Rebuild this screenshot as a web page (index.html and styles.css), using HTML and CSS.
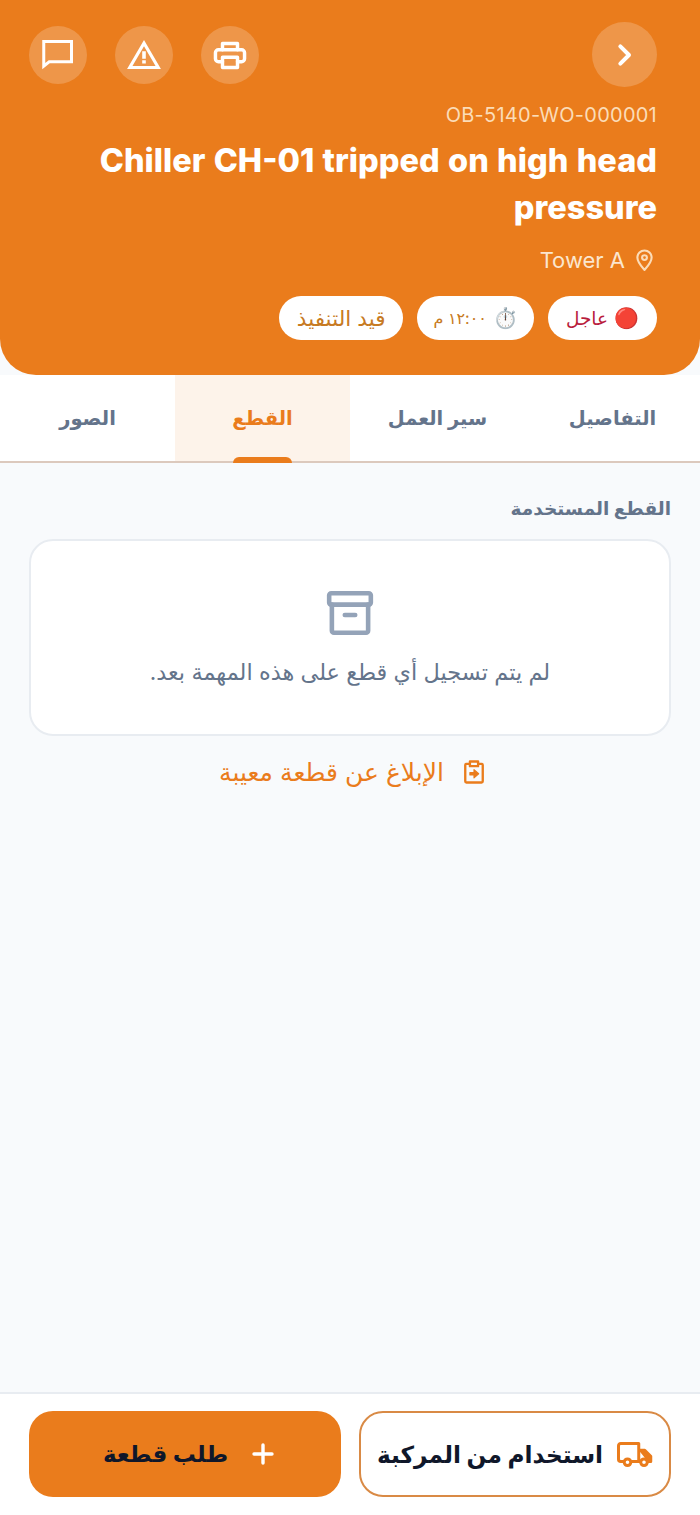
FILE: index.html
```html
<!DOCTYPE html>
<html lang="ar" dir="rtl">
<head>
    <meta charset="utf-8">
    <title>Work Order</title>
    <link rel="stylesheet" href="styles.css">
</head>
<body>
    <div class="page">
        <header class="hero">
            <div class="hero-top">
                <button class="back-btn" type="button">
                    <svg width="32" height="32" viewBox="0 0 24 24" fill="none" stroke="#fff" stroke-width="3" stroke-linecap="round" stroke-linejoin="round"><path d="M8.500 5.500l6.500 6.500-6.500 6.500"/></svg>
                </button>
                <div class="hero-actions">
                    <button class="icon-btn" type="button">
                        <svg width="36" height="36" viewBox="0 0 24 24" fill="none" stroke="#fff" stroke-width="2.300" stroke-linejoin="round" stroke-linecap="round"><path d="M7 8.500V4.300h10v4.200"/><path d="M7 16.500H4.300a2 2 0 0 1-2-2v-4a2 2 0 0 1 2-2h15.400a2 2 0 0 1 2 2v4a2 2 0 0 1-2 2H17"/><path d="M7 13.500h10v6.800H7z"/></svg>
                    </button>
                    <button class="icon-btn" type="button">
                        <svg width="36" height="36" viewBox="0 0 24 24" fill="#fff"><path fill-rule="evenodd" d="M12 2l11.300 19.300H.7L12 2zm0 4.200L4.300 19.300h15.400L12 6.200z"/><path d="M10.800 9.500h2.400v5h-2.400zM10.800 15.500h2.400v2.200h-2.400z"/></svg>
                    </button>
                    <button class="icon-btn" type="button">
                        <svg width="36" height="36" viewBox="0 0 24 24" fill="#fff"><path fill-rule="evenodd" d="M1.500 2H22v15.500H6.500l-5 4V2zm2 2v13.300l2.300-1.800H20V4H3.500z"/></svg>
                    </button>
                </div>
            </div>
            <div class="wo-code">OB-5140-WO-000001</div>
            <h1 class="wo-title">Chiller CH-01 tripped on high head pressure</h1>
            <div class="wo-location">
                <svg width="17" height="22" viewBox="4 1.500 16 21" fill="none" stroke="#fbdcb8" stroke-width="2" stroke-linejoin="round"><path d="M12 21.500c-1-1.200-6.800-7-6.800-11.800a6.800 6.800 0 0 1 13.600 0c0 4.800-5.800 10.600-6.800 11.800z"/><circle cx="12" cy="9.700" r="2.300"/></svg>
                <span class="wo-location-text">Tower A</span>
            </div>
            <div class="chips">
                <span class="chip chip-red"><span class="chip-emoji">🔴</span> عاجل</span>
                <span class="chip chip-time"><span class="chip-emoji">⏱️</span> ١٢:٠٠ م</span>
                <span class="chip chip-status">قيد التنفيذ</span>
            </div>
        </header>

        <nav class="tabs">
            <div class="tab">التفاصيل</div>
            <div class="tab">سير العمل</div>
            <div class="tab active">القطع</div>
            <div class="tab">الصور</div>
        </nav>

        <main class="content">
            <div class="section-label">القطع المستخدمة</div>
            <div class="empty-card">
                <svg width="50" height="50" viewBox="0 0 24 24" fill="none" stroke="#94a3b8" stroke-width="2.200" stroke-linecap="round" stroke-linejoin="round"><rect x="2" y="2" width="20" height="5.500" rx="1"/><path d="M3.300 7.500V20a1 1 0 0 0 1 1h15.400a1 1 0 0 0 1-1V7.500"/><path d="M9.500 12.500h5"/></svg>
                <p class="empty-text">لم يتم تسجيل أي قطع على هذه المهمة بعد.</p>
            </div>
            <a class="report-link">
                <svg width="28" height="28" viewBox="0 0 24 24" fill="none" stroke="#ea7c1c" stroke-width="2" stroke-linejoin="round"><path d="M8.500 5H5.500a1 1 0 0 0-1 1v14a1 1 0 0 0 1 1h13a1 1 0 0 0 1-1V6a1 1 0 0 0-1-1h-3"/><path d="M8.500 3h7v4h-7z"/><path d="M8.500 12.500H12V10l4 3.500-4 3.500v-2.500H8.500z" fill="#ea7c1c" stroke-width="1"/></svg>
                <span>الإبلاغ عن قطعة معيبة</span>
            </a>
        </main>

        <footer class="bottom-bar">
            <button class="bar-btn bar-outline" type="button">
                <svg width="36" height="36" viewBox="0 0 24 24" fill="none" stroke="#ea7c1c" stroke-width="2" stroke-linejoin="round"><path d="M4.700 17H2.500a1.500 1.500 0 0 1-1.500-1.500v-9A1.500 1.500 0 0 1 2.500 5H14.500v12H9.500"/><path d="M14.500 9.500h4l4 4v3.500h-2" fill="#ea7c1c"/><path d="M14.500 17h1"/><circle cx="7" cy="17.500" r="2.200"/><circle cx="18" cy="17.500" r="2.200"/></svg>
                <span>استخدام من المركبة</span>
            </button>
            <button class="bar-btn bar-solid" type="button">
                <svg width="24" height="24" viewBox="0 0 24 24" fill="none" stroke="#fff" stroke-width="3.400" stroke-linecap="round"><path d="M12 3v18M3 12h18"/></svg>
                <span>طلب قطعة</span>
            </button>
        </footer>
    </div>
</body>
</html>
```

FILE: styles.css
```css
* {
    box-sizing: border-box;
}

body {
    margin: 0;
    font-family: Inter, "DejaVu Sans", sans-serif;
    background-color: #f8fafc;
}

button {
    font-family: inherit;
    border: none;
    cursor: pointer;
    padding: 0;
}

.page {
    width: 700px;
    height: 1515px;
    display: flex;
    flex-direction: column;
}

.hero {
    height: 375px;
    flex-shrink: 0;
    padding: 22px 43px 0 43px;
    background-color: #ea7c1c;
    border-radius: 0 0 36px 36px;
    color: #fff;
}

.hero-top {
    display: flex;
    justify-content: space-between;
    align-items: center;
    height: 65px;
    margin-left: -14px;
}

.back-btn {
    width: 65px;
    height: 65px;
    border-radius: 50%;
    background-color: rgba(255, 255, 255, 0.2);
    display: flex;
    align-items: center;
    justify-content: center;
}

.hero-actions {
    display: flex;
    gap: 28px;
}

.icon-btn {
    width: 58px;
    height: 58px;
    border-radius: 50%;
    background-color: rgba(255, 255, 255, 0.2);
    display: flex;
    align-items: center;
    justify-content: center;
}

.wo-code {
    direction: ltr;
    text-align: right;
    margin-top: 16px;
    font-size: 20px;
    line-height: 24px;
    letter-spacing: 0.25px;
    color: #fbdcb8;
}

.wo-title {
    direction: ltr;
    text-align: right;
    margin: 10px 0 0 0;
    font-size: 32.500px;
    line-height: 47px;
    font-weight: 800;
    word-spacing: 1.200px;
}

.wo-location {
    display: flex;
    align-items: center;
    gap: 11px;
    margin: 15px 4px 0 0;
    height: 28px;
    color: #fbe6cf;
    font-size: 22px;
}

.wo-location-text {
    direction: ltr;
}

.chips {
    display: flex;
    gap: 14px;
    margin-top: 22px;
}

.chip {
    height: 44px;
    padding: 0 18px;
    background-color: #fff;
    border-radius: 22px;
    display: flex;
    align-items: center;
    gap: 6px;
    font-size: 18.500px;
    color: #c77a22;
}

.chip-red {
    color: #b91c3c;
}

.chip-time {
    padding: 0 16px;
    font-size: 16px;
}

.chip-status {
    font-size: 21.600px;
}

.chip-emoji {
    font-size: 20px;
}

.tabs {
    display: flex;
    height: 88px;
    flex-shrink: 0;
    background-color: #fff;
    border-bottom: 2px solid #dcc9bd;
}

.tab {
    flex: 1;
    display: flex;
    align-items: center;
    justify-content: center;
    font-size: 19.500px;
    font-weight: 700;
    color: #64748b;
    position: relative;
}

.tab.active {
    background-color: #fdf3ea;
    color: #ea7c1c;
}

.tab.active::after {
    content: "";
    position: absolute;
    left: 58px;
    right: 58px;
    bottom: -2px;
    height: 6px;
    background-color: #ea7c1c;
    border-radius: 6px 6px 0 0;
}

.content {
    flex: 1;
    padding: 32px 29px 0 29px;
}

.section-label {
    font-size: 18.500px;
    font-weight: 700;
    color: #64748b;
    line-height: 26px;
}

.empty-card {
    margin-top: 18px;
    height: 197px;
    background-color: #fff;
    border: 2px solid #e8ecf1;
    border-radius: 24px;
    display: flex;
    flex-direction: column;
    align-items: center;
    padding-top: 48px;
}

.empty-text {
    margin: 19px 0 0 0;
    font-size: 22.400px;
    line-height: 28px;
    color: #64748b;
}

.report-link {
    display: flex;
    align-items: center;
    justify-content: center;
    gap: 16px;
    margin-top: 20px;
    padding-left: 7px;
    font-size: 25px;
    line-height: 32px;
    color: #ea7c1c;
}

.bottom-bar {
    height: 123px;
    flex-shrink: 0;
    background-color: #fff;
    border-top: 2px solid #e8ecf1;
    padding: 17px 29px 0 29px;
    display: flex;
    gap: 18px;
}

.bar-btn {
    flex: 0 0 312px;
    height: 86px;
    border-radius: 24px;
    display: flex;
    align-items: center;
    justify-content: center;
    gap: 14px;
    font-size: 23.300px;
    font-weight: 700;
    color: #0f172a;
}

.bar-outline {
    background-color: #fff;
    border: 2px solid #d98a45;
}

.bar-solid {
    background-color: #ea7c1c;
    gap: 23px;
    padding-left: 8px;
    font-size: 23px;
}
```
